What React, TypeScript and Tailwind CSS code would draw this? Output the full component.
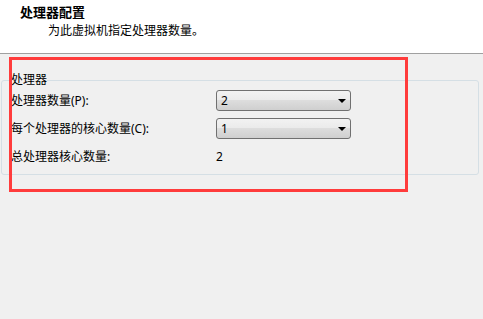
import React from "react";

function Combo({ value }: { value: string }) {
  return (
    <div className="relative flex h-[21px] w-[135px] items-center rounded-[3px] border border-[#707070] bg-[linear-gradient(to_bottom,#f2f2f2_0%,#ebebeb_45%,#dddddd_50%,#cfcfcf_100%)] pl-[4px] text-[12px] leading-[14px] text-black">
      <span>{value}</span>
      <svg className="absolute right-[4px] top-[8px]" width="8" height="4" viewBox="0 0 8 4">
        <polygon points="0,0 8,0 4,4" fill="#000" />
      </svg>
    </div>
  );
}

export default function App() {
  return (
    <div
      className="relative flex h-[319px] w-[483px] flex-col overflow-hidden bg-[#f0f0f0] text-black"
      style={{ fontFamily: '"Noto Sans", "Noto Sans CJK SC", sans-serif' }}
    >
      <div className="h-[54px] shrink-0 border-b border-[#a0a0a0] bg-white">
        <div className="pl-[20px] pt-[4px] text-[13px] font-bold leading-[16px]">处理器配置</div>
        <div className="mt-[3px] pl-[48px] text-[12px] leading-[16px]">为此虚拟机指定处理器数量。</div>
      </div>
      <fieldset className="ml-[1px] mr-[4px] mt-[19px] rounded-[3px] border border-[#d5dfe5] pb-[7px] pl-[9px] pr-[9px]">
        <legend className="p-0 text-[12px] leading-[14px]">处理器</legend>
        <div className="mt-[3px] flex flex-col gap-[7px] text-[12px] leading-[14px]">
          <div className="flex h-[21px] items-center">
            <span className="w-[205px]">处理器数量(P):</span>
            <Combo value="2" />
          </div>
          <div className="flex h-[21px] items-center">
            <span className="w-[205px]">每个处理器的核心数量(C):</span>
            <Combo value="1" />
          </div>
          <div className="flex h-[21px] items-center">
            <span className="w-[205px]">总处理器核心数量:</span>
            <span>2</span>
          </div>
        </div>
      </fieldset>
      <div className="pointer-events-none absolute left-[9px] top-[57px] h-[135px] w-[399px] border-[3px] border-[#ff3c3c]" />
    </div>
  );
}
